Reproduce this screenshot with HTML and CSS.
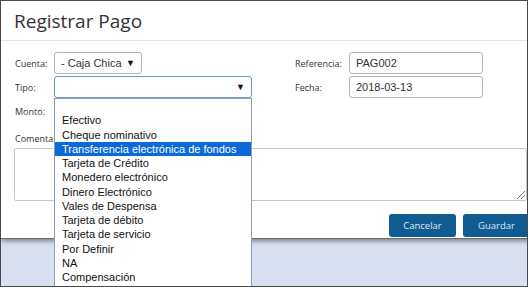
FILE: index.html
```html
<!DOCTYPE html>
<html lang="es">
<head>
  <meta charset="UTF-8">
  <title>Registrar Pago</title>
  <link rel="stylesheet" href="styles.css">
</head>
<body>
  <div class="screen">
    <div class="modal">
      <div class="modal-header">
        <h2>Registrar Pago</h2>
      </div>

      <div class="modal-body">
        <div class="form-grid">
          <label>Cuenta:</label>
          <div class="select short">- Caja Chica<span class="arrow">&#9660;</span></div>
          <span></span>
          <label>Referencia:</label>
          <div class="input">PAG002</div>

          <label>Tipo:</label>
          <div class="select focused"><span class="arrow">&#9660;</span></div>
          <span></span>
          <label>Fecha:</label>
          <div class="input">2018-03-13</div>

          <label>Monto:</label>
          <div class="input"></div>
        </div>

        <label class="comment-label">Comentarios:</label>
        <div class="textarea"><span class="grip"></span></div>
      </div>

      <div class="modal-footer">
        <button class="btn">Cancelar</button>
        <button class="btn">Guardar</button>
      </div>
    </div>

    <!-- open list of the Tipo select -->
    <ul class="dropdown">
      <li>&nbsp;</li>
      <li>Efectivo</li>
      <li>Cheque nominativo</li>
      <li class="selected">Transferencia electrónica de fondos</li>
      <li>Tarjeta de Crédito</li>
      <li>Monedero electrónico</li>
      <li>Dinero Electrónico</li>
      <li>Vales de Despensa</li>
      <li>Tarjeta de débito</li>
      <li>Tarjeta de servicio</li>
      <li>Por Definir</li>
      <li>NA</li>
      <li>Compensación</li>
    </ul>
  </div>
</body>
</html>
```

FILE: styles.css
```css
* {
  box-sizing: border-box;
}

body {
  margin: 0;
  font-family: "Open Sans", Arial, sans-serif;
  color: #333;
}

.screen {
  position: relative;
  width: 528px;
  height: 287px;
  border: 1px solid #4a4a4a;
  background-color: #d9e1f1;
  overflow: hidden;
}

.modal {
  width: 534px;
  height: 238px;
  background-color: #fff;
  border-bottom: 1px solid #6a6a6a;
  box-shadow: 0 2px 5px rgba(0, 0, 0, 0.45);
}

.modal-header {
  height: 40px;
  border-bottom: 1px solid #e5e5e5;
  padding-left: 13px;
}

.modal-header h2 {
  margin: 0;
  font-size: 19px;
  font-weight: 400;
  line-height: 40px;
  color: #333;
}

.modal-body {
  padding: 11px 0 0 13px;
}

.form-grid {
  display: grid;
  grid-template-columns: 40px 198px 42px 55px 134px;
  grid-auto-rows: 22px;
  row-gap: 2px;
  align-items: center;
}

.form-grid label {
  padding-left: 1px;
  font-size: 9px;
}

.select,
.input {
  position: relative;
  height: 22px;
  border: 1px solid #b3b3b3;
  border-radius: 3px;
  background-color: #fff;
  padding-left: 6px;
  font-family: "Liberation Sans", Arial, sans-serif;
  font-size: 11px;
  line-height: 20px;
  color: #333;
}

.select.short {
  width: 88px;
}

.select.focused {
  border-color: #6f98c8;
}

.arrow {
  position: absolute;
  right: 6px;
  top: 0;
  font-size: 9px;
  color: #111;
}

.comment-label {
  display: block;
  margin-top: 11px;
  padding-left: 1px;
  font-size: 9px;
  line-height: 12px;
}

.textarea {
  position: relative;
  width: 513px;
  height: 53px;
  margin-top: 3px;
  border: 1px solid #c6c6c6;
  border-radius: 2px;
}

.grip {
  position: absolute;
  right: 1px;
  bottom: 1px;
  width: 8px;
  height: 8px;
  background: linear-gradient(135deg, transparent 45%, #777 45%, #777 55%, transparent 55%, transparent 70%, #777 70%, #777 80%, transparent 80%);
}

.modal-footer {
  display: flex;
  gap: 7px;
  padding: 13px 0 0 388px;
}

.btn {
  width: 67px;
  height: 23px;
  border: none;
  border-radius: 3px;
  background-color: #115b93;
  color: #dde8f3;
  font-family: "Open Sans", Arial, sans-serif;
  font-size: 9.5px;
  cursor: pointer;
}

.dropdown {
  position: absolute;
  left: 53px;
  top: 97px;
  width: 198px;
  height: 200px;
  margin: 0;
  padding: 0;
  list-style: none;
  border: 1px solid #8c9db5;
  background-color: #fff;
  font-family: "Liberation Sans", Arial, sans-serif;
  font-size: 11px;
  color: #111;
}

.dropdown li {
  height: 14.27px;
  line-height: 14.27px;
  padding-left: 7px;
  white-space: nowrap;
}

.dropdown li.selected {
  background-color: #0b6ad8;
  color: #fff;
}
```
